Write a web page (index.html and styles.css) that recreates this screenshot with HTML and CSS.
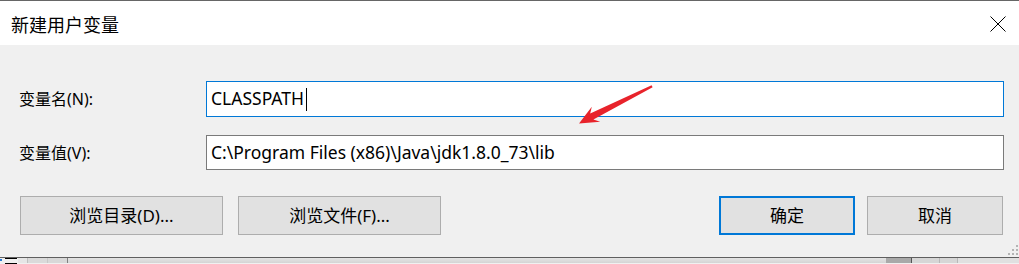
FILE: index.html
```html
<!DOCTYPE html>
<html lang="zh-CN">
<head>
<meta charset="utf-8">
<title>新建用户变量</title>
<link rel="stylesheet" href="styles.css">
</head>
<body>
<div class="dialog">
  <div class="titlebar">
    <span class="title">新建用户变量</span>
    <svg class="close" width="16" height="16" viewBox="0 0 16 16"><path d="M0.5 0.5 L15.5 15.5 M15.5 0.5 L0.5 15.5" stroke="#000" stroke-width="1" fill="none"/></svg>
  </div>
  <div class="body">
    <div class="form">
      <label class="label">变量名(N):</label>
      <div class="input focus"><span class="value">CLASSPATH</span><span class="caret"></span></div>
      <label class="label">变量值(V):</label>
      <div class="input short"><span class="value">C:\Program Files (x86)\Java\jdk1.8.0_73\lib</span></div>
    </div>
    <div class="buttons">
      <div class="group left">
        <button class="btn wide">浏览目录(D)...</button>
        <button class="btn wide">浏览文件(F)...</button>
      </div>
      <div class="group right">
        <button class="btn default">确定</button>
        <button class="btn">取消</button>
      </div>
    </div>
    <svg class="grip" width="12" height="12" viewBox="0 0 12 12">
      <rect x="9" y="1" width="2" height="2" fill="#b4b4b4"/>
      <rect x="5" y="5" width="2" height="2" fill="#b4b4b4"/>
      <rect x="9" y="5" width="2" height="2" fill="#b4b4b4"/>
      <rect x="1" y="9" width="2" height="2" fill="#b4b4b4"/>
      <rect x="5" y="9" width="2" height="2" fill="#b4b4b4"/>
      <rect x="9" y="9" width="2" height="2" fill="#b4b4b4"/>
    </svg>
    <svg class="arrow" width="90" height="50" viewBox="570 80 90 50">
      <polygon points="651.6,85.2 652.6,87.2 593.4,119.4 600.2,121.8 579,123.6 591.8,106.8 590.2,113.6" fill="#e8232b"/>
    </svg>
  </div>
  <div class="under">
    <div class="cell icon"><span class="dot"></span><span class="lines"></span></div>
    <div class="cell c1"></div>
    <div class="cell c2"></div>
    <div class="cell c3"></div>
    <div class="cell fill"></div>
    <div class="cell dark"></div>
    <div class="cell c4"></div>
    <div class="cell c5"></div>
    <div class="cell c6"></div>
  </div>
</div>
</body>
</html>
```
FILE: styles.css
```css
html, body {
  margin: 0;
  padding: 0;
  background: #f0f0f0;
}
body {
  width: 1019px;
  height: 264px;
  overflow: hidden;
  font-family: "Noto Sans", "Noto Sans CJK SC", sans-serif;
  color: #000;
}
.dialog {
  display: flex;
  flex-direction: column;
  border-top: 1px solid #666;
}
.titlebar {
  height: 44px;
  background: #fff;
  display: flex;
  align-items: center;
  justify-content: space-between;
  padding: 0 13px 0 11px;
}
.title {
  font-family: "Noto Sans CJK SC", sans-serif;
  font-size: 18px;
  line-height: 1;
  margin-top: 1px;
}
.close {
  display: block;
  margin-top: 1px;
}
.body {
  position: relative;
  height: 213px;
  box-sizing: border-box;
  padding-top: 36px;
  background: #f0f0f0;
  border-bottom: 1px solid #5f5f5f;
}
.form {
  display: grid;
  grid-template-columns: 187px 798px;
  grid-template-rows: 36px 35px;
  row-gap: 18px;
  padding-left: 19px;
  align-items: center;
}
.label {
  font-family: "Noto Sans", "Noto Sans CJK SC", sans-serif;
  font-size: 16px;
  line-height: 1;
}
.input {
  height: 36px;
  box-sizing: border-box;
  background: #fff;
  border: 1px solid #7a7a7a;
  display: flex;
  align-items: center;
  padding-left: 4px;
  font-size: 17.5px;
}
.input.short {
  height: 35px;
}
.input.focus {
  border-color: #0078d7;
}
.value {
  line-height: 1;
  white-space: pre;
}
.caret {
  display: inline-block;
  width: 1px;
  height: 23px;
  background: #000;
  margin-left: 2px;
}
.buttons {
  display: flex;
  justify-content: space-between;
  padding: 0 16px 0 20px;
  margin-top: 26px;
}
.group {
  display: flex;
}
.group.left {
  gap: 15px;
}
.group.right {
  gap: 12px;
}
.btn {
  height: 39px;
  width: 136px;
  box-sizing: border-box;
  background: #e1e1e1;
  border: 1px solid #adadad;
  font-family: "Noto Sans", "Noto Sans CJK SC", sans-serif;
  font-size: 17px;
  color: #000;
  padding: 0;
  margin: 0;
  line-height: 1;
}
.btn.wide {
  width: 203px;
}
.btn.default {
  border: 2px solid #0078d7;
}
.grip {
  position: absolute;
  right: 0;
  bottom: 1px;
}
.arrow {
  position: absolute;
  left: 570px;
  top: 35px;
}
.under {
  height: 5px;
  display: flex;
  background: #dedede;
}
.cell {
  height: 5px;
  box-sizing: border-box;
}
.icon {
  width: 18px;
  position: relative;
  background: #f0f0f0;
}
.dot {
  position: absolute;
  left: 0;
  top: 1px;
  width: 2px;
  height: 2px;
  background: #2a7ad0;
}
.lines {
  position: absolute;
  left: 5px;
  top: 0;
  width: 12px;
  height: 4px;
  border-top: 1px solid #000;
  border-bottom: 1px solid #000;
}
.c1 { width: 10px; background: #e6e6e6; border-right: 1px solid #c0c0c0; }
.c2 { width: 20px; background: #dadada; border-right: 1px solid #c8c8c8; }
.c3 { width: 20px; background: #d8d8d8; border-right: 1px solid #808080; }
.fill { flex: 1; background: linear-gradient(#e4e4e4, #d4d4d4); }
.dark { width: 26px; background: #a9a9a9; border-right: 1px solid #555; }
.c4 { width: 28px; background: #d6d6d6; border-right: 1px solid #b8b8b8; }
.c5 { width: 18px; background: #d6d6d6; border-right: 1px solid #b8b8b8; }
.c6 { width: 61px; background: #e0e0e0; }
```
